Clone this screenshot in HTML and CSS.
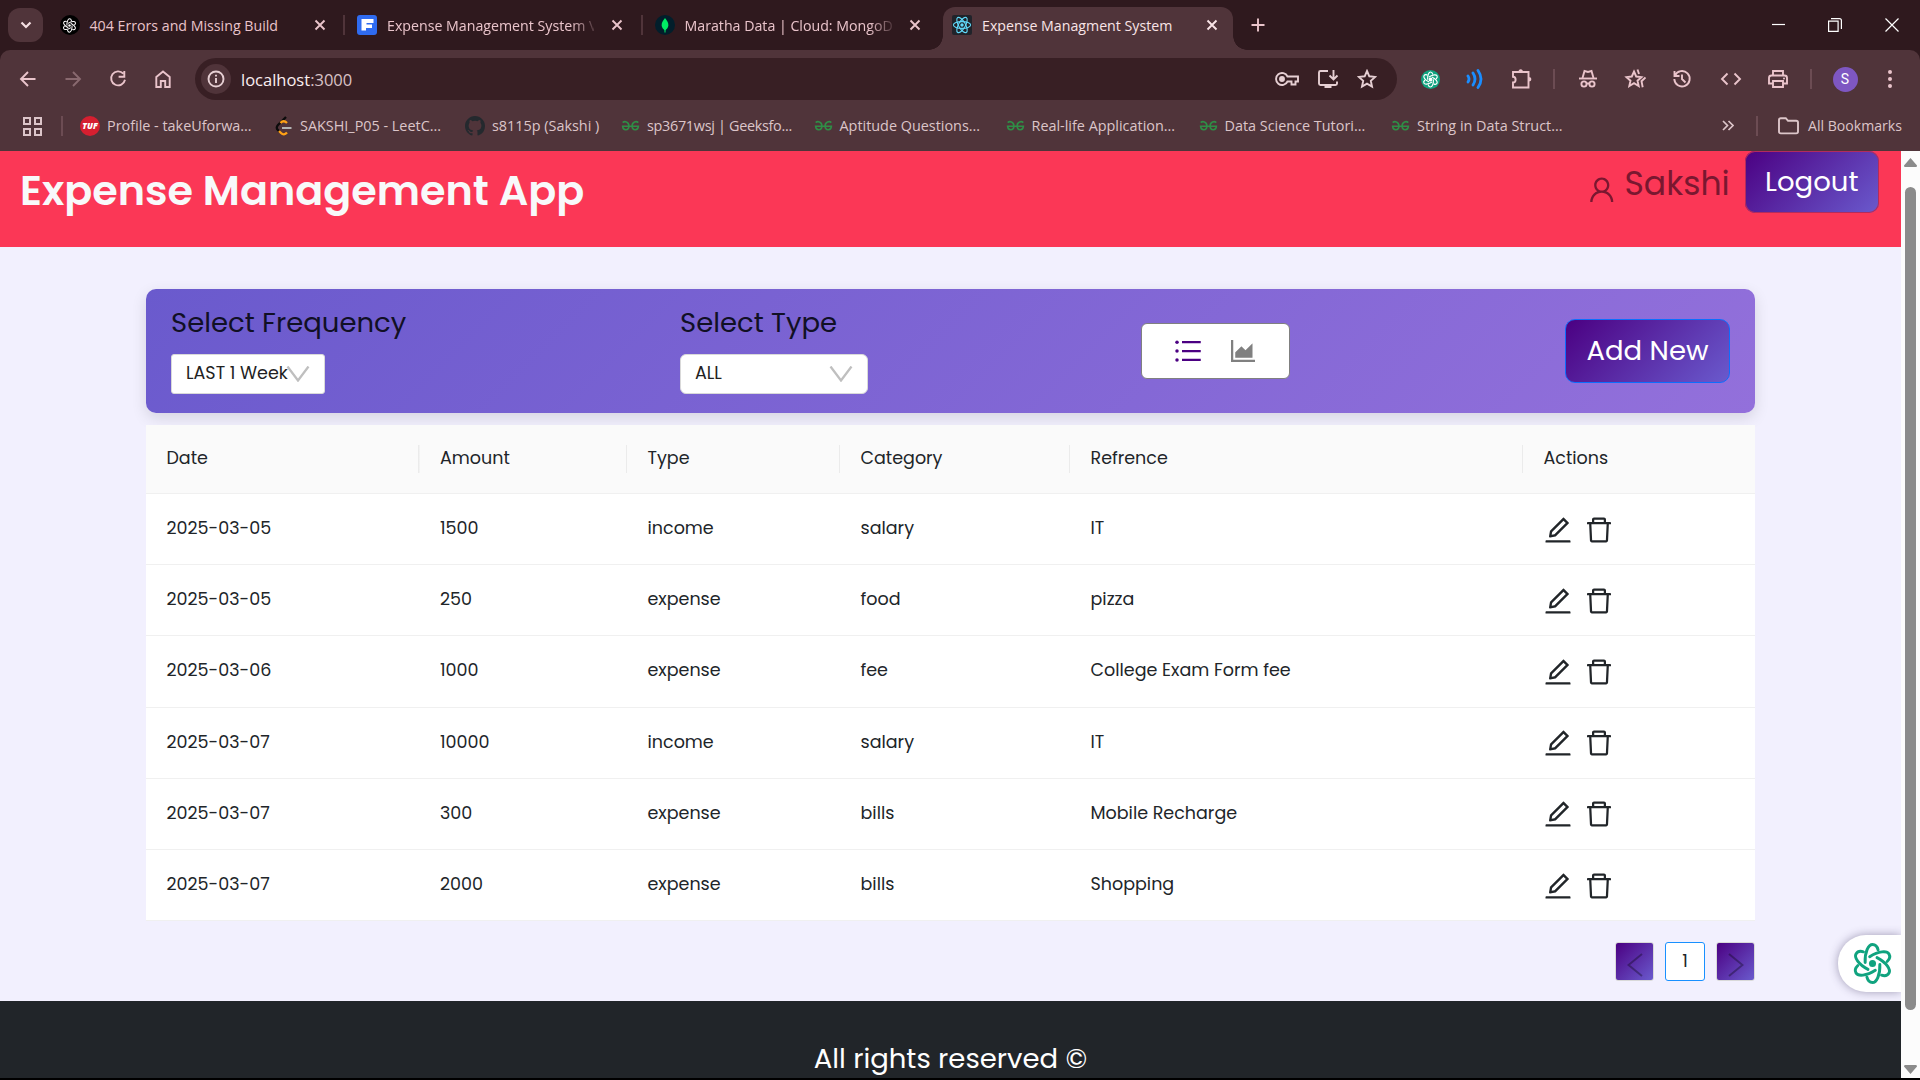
FILE: index.html
```html
<!DOCTYPE html>
<html lang="en">
<head>
<meta charset="utf-8">
<title>Expense Managment System</title>
<link rel="stylesheet" href="styles.css">
</head>
<body>
<svg class="defs" width="0" height="0" aria-hidden="true">
  <symbol id="x" viewBox="0 0 12 12"><path d="M1.500 1.500l9 9M10.500 1.500l-9 9" fill="none" stroke="currentColor" stroke-width="1.900"/></symbol>
  <symbol id="gfg" viewBox="0 0 20 12"><path d="M1.800 2.400C3.500.8 8.300 1 8.300 6c0 5-6.300 5.300-6.600.2H18.300c-.3 5.100-6.600 4.800-6.600-.2 0-5 4.800-5.200 6.500-3.600" fill="none" stroke="#2f8d46" stroke-width="1.700"/></symbol>
  <symbol id="knot" viewBox="-22 -22 44 44">
    <g fill="none" stroke="currentColor" stroke-linecap="round">
      <path id="petal" d="M-7.500-1C-8-12-4-19.500 0-19.500c3 0 5 2.500 5.700 5.500"/>
      <use href="#petal" transform="rotate(60)"/><use href="#petal" transform="rotate(120)"/><use href="#petal" transform="rotate(180)"/><use href="#petal" transform="rotate(240)"/><use href="#petal" transform="rotate(300)"/>
    </g>
    <circle r="3.600" fill="currentColor"/>
  </symbol>
  <symbol id="edit" viewBox="64 64 896 896"><path fill="currentColor" d="M257.700 752c2 0 4-.2 6-.5L431.900 722c2-.4 3.900-1.300 5.300-2.800l423.900-423.900a9.960 9.960 0 000-14.100L694.900 114.900c-1.900-1.900-4.400-2.900-7.100-2.900s-5.200 1-7.100 2.900L256.800 538.800c-1.500 1.500-2.400 3.300-2.800 5.300l-29.500 168.200a33.500 33.500 0 009.400 29.800c6.600 6.400 14.900 9.900 23.800 9.900zm67.400-174.400L687.800 215l73.300 73.300-362.700 362.600-88.900 15.700 15.600-89zM880 836H144c-17.700 0-32 14.300-32 32v36c0 4.400 3.600 8 8 8h784c4.400 0 8-3.600 8-8v-36c0-17.700-14.300-32-32-32z"/></symbol>
  <symbol id="trash" viewBox="64 64 896 896"><path fill="currentColor" d="M360 184h304v72h72v-80c0-35.300-28.700-64-64-64H352c-35.300 0-64 28.700-64 64v80h72v-72zm504 72H160c-17.700 0-32 14.300-32 32v32c0 4.400 3.600 8 8 8h60.400l24.700 523c1.600 34.100 29.800 61 63.900 61h454c34.200 0 62.300-26.800 63.900-61l24.700-523H888c4.400 0 8-3.600 8-8v-32c0-17.700-14.300-32-32-32zM731.300 840H292.700l-24.200-512h487l-24.200 512z"/></symbol>
  <symbol id="down" viewBox="0 0 24 16"><path d="M1.500.5L12 14.500 22.500.5" fill="none" stroke="#bfbfbf" stroke-width="2.300"/></symbol>
</svg>

<div class="tabstrip">
  <span class="tab-search"><svg width="12" height="8" viewBox="0 0 12 8"><path d="M1.500 1.500L6 6l4.500-4.500" fill="none" stroke="currentColor" stroke-width="2.200"/></svg></span>
  <div class="tab">
    <span class="fav fav-gpt"><svg width="15" height="15" stroke-width="3"><use href="#knot"/></svg></span>
    <span class="tab-title">404 Errors and Missing Build</span>
    <svg class="close" width="12" height="12"><use href="#x"/></svg>
  </div>
  <div class="tab divided">
    <svg class="fav" viewBox="0 0 20 20"><rect width="20" height="20" rx="3" fill="#2f6bf0"/><path d="M4.500 4h12v4h-7v1.500h5.500V13H9v2.500H4.500z" fill="#fff"/></svg>
    <span class="tab-title fade">Expense Management System V</span>
    <svg class="close" width="12" height="12"><use href="#x"/></svg>
  </div>
  <div class="tab divided">
    <svg class="fav" viewBox="0 0 20 20"><circle cx="10" cy="10" r="10" fill="#021e2b"/><path d="M10 3c-5 6-4 9.500 0 12.500C14 12.500 15 9 10 3z" fill="#00ed64"/><path d="M10 11v6.500" stroke="#00ed64"/></svg>
    <span class="tab-title fade">Maratha Data | Cloud: MongoD</span>
    <svg class="close" width="12" height="12"><use href="#x"/></svg>
  </div>
  <div class="tab active">
    <svg class="fav" viewBox="0 0 20 20"><rect width="20" height="20" rx="2" fill="#20232a"/><g fill="none" stroke="#61dafb" stroke-width="1.100"><ellipse cx="10" cy="10" rx="8.600" ry="3.400"/><ellipse cx="10" cy="10" rx="8.600" ry="3.400" transform="rotate(60 10 10)"/><ellipse cx="10" cy="10" rx="8.600" ry="3.400" transform="rotate(120 10 10)"/></g><circle cx="10" cy="10" r="1.700" fill="#61dafb"/></svg>
    <span class="tab-title">Expense Managment System</span>
    <svg class="close" width="12" height="12"><use href="#x"/></svg>
  </div>
  <svg class="plus" width="14" height="14" viewBox="0 0 14 14"><path d="M7 .5v13M.5 7h13" stroke="currentColor" stroke-width="1.900"/></svg>
  <div class="window-controls">
    <svg width="13" height="14" viewBox="0 0 13 14"><path d="M0 6.500h13" stroke="#fff" stroke-width="1.200"/></svg>
    <svg width="14" height="14" viewBox="0 0 14 14"><path d="M.6 3.200h9.500v10.200H.6zM3 .6h8.500q1.900 0 1.900 1.900v8.500" fill="none" stroke="#fff" stroke-width="1.200"/></svg>
    <svg width="14" height="14" viewBox="0 0 14 14"><path d="M.5.5l13 13M13.500.5l-13 13" stroke="#fff" stroke-width="1.200"/></svg>
  </div>
</div>

<div class="toolbar-wrap">
<div class="toolbar">
  <div class="nav">
    <svg width="20" height="20" viewBox="0 0 20 20"><path d="M17.500 10H3.500M10 3l-7 7 7 7"/></svg>
    <svg class="dim" width="20" height="20" viewBox="0 0 20 20"><path d="M2.500 10h14M10 3l7 7-7 7"/></svg>
    <svg width="20" height="20" viewBox="0 0 20 20"><path d="M15.300 4.600A7 7 0 1 0 17 10.800M16.300 2v5.700h-5.700"/></svg>
    <svg width="20" height="20" viewBox="0 0 20 20"><path d="M3.300 8L10 2.500 16.700 8v10h-4.500v-6H7.800v6H3.300z"/></svg>
  </div>
  <div class="omnibox">
    <span class="site-info"><svg width="18" height="18" viewBox="0 0 18 18"><circle cx="9" cy="9" r="7.500"/><path d="M9 8v5M9 4.800v1.800"/></svg></span>
    <span class="url">localhost<i>:3000</i></span>
    <div class="omni-actions">
      <svg width="24" height="20" viewBox="0 0 24 20"><path d="M12.500 7.500A6 6 0 1 0 12.500 12.500H16.500v3h4v-3H23v-5z"/><circle cx="7" cy="10" r="2" fill="currentColor"/></svg>
      <svg width="24" height="20" viewBox="0 0 24 20"><path d="M12 2H4.500Q3 2 3 3.500v11Q3 16 4.500 16h15q1.500 0 1.500-1.500V12.500M17.500 1v9M13.500 6.500l4 4 4-4"/><path d="M8.500 17h7v2h-7z" fill="currentColor" stroke="none"/></svg>
      <svg width="20" height="20" viewBox="0 0 20 20"><path d="M10 2l2.300 5.300 5.900.6-4.400 3.900 1.200 5.800-5-3-5 3 1.200-5.800L1.800 7.900l5.900-.6z"/></svg>
    </div>
  </div>
  <div class="extensions">
    <span class="ext-gpt"><svg width="17" height="17"><use href="#knot"/></svg></span>
    <svg class="wave" width="20" height="20" viewBox="0 0 20 20"><path d="M3 7q2 3 0 6M8 4q4 6 0 12M13 1.500q6 8.500 0 17" stroke-linecap="round"/></svg>
    <svg width="22" height="22" viewBox="0 0 22 22"><path d="M3 4h15.500v15.500H3v-5c3.500-.2 3.500-5.500 0-5.700z"/><path d="M8.500 4a2.200 2.800 0 0 1 4.400 0zM18.500 9a2.800 2.200 0 0 1 0 4.400z" fill="currentColor" stroke="none"/></svg>
    <b></b>
    <svg width="20" height="20" viewBox="0 0 20 20"><path d="M1 9.500h18"/><path d="M4.500 9l2-7 3.500 1 3.500-1 2 7"/><circle cx="6" cy="15" r="2.600"/><circle cx="14" cy="15" r="2.600"/><path d="M8.500 14.500h3"/></svg>
    <svg width="22" height="20" viewBox="0 0 22 20"><path d="M10 2.500l2.200 5 5.300.6-4 3.600 1.200 5.300-4.700-2.800L5.300 17l1.200-5.300-4-3.600 5.300-.6z"/><path d="M13.500.5l1.500 4.500M21.500 8.500l-4 3.700 1.200 6"/></svg>
    <svg width="20" height="20" viewBox="0 0 20 20"><path d="M3 6.500A7.700 7.700 0 1 1 2.300 10M2.500 2v5h5M10 5.500V10l3.500 3.500"/></svg>
    <svg width="22" height="20" viewBox="0 0 22 20"><path d="M7.500 4.500L2 10l5.500 5.500M14.500 4.500L20 10l-5.500 5.500"/></svg>
    <svg width="22" height="20" viewBox="0 0 22 20"><path d="M6 6V2h10v4M6 14.500H2V9q0-2.500 2.500-2.500h13Q20 6.500 20 9v5.500h-4M6 12h10v6H6z"/><circle cx="17" cy="9.500" r="1" fill="currentColor" stroke="none"/></svg>
    <b></b>
    <span class="avatar">S</span>
    <svg width="6" height="20" viewBox="0 0 6 20"><g fill="currentColor" stroke="none"><circle cx="3" cy="3" r="2"/><circle cx="3" cy="10" r="2"/><circle cx="3" cy="17" r="2"/></g></svg>
  </div>
</div>
</div>

<div class="bookmarks">
  <svg class="apps" width="19" height="19" viewBox="0 0 19 19"><path d="M1 1h6v6H1zM12 1h6v6h-6zM1 12h6v6H1zM12 12h6v6h-6z" fill="none" stroke="currentColor" stroke-width="2"/></svg>
  <b></b>
  <div class="marks">
    <span><em class="tuf">TUF</em>Profile - takeUforwa...</span>
    <span><svg class="leet" width="17" height="20" viewBox="0 0 17 20"><path d="M11 1L3 9q-2.500 3 0 5l2 2" fill="none" stroke="#0b0b0b" stroke-width="2.300"/><path d="M5.500 7q3-3.500 6.500 0M4 15l2 2q3 3 6-.5" fill="none" stroke="#ffa116" stroke-width="2.300"/><path d="M7 12h9.500" stroke="#b3b3b3" stroke-width="2"/></svg>SAKSHI_P05 - LeetC...</span>
    <span><svg class="git" width="20" height="20" viewBox="0 0 16 16"><path fill="#24292e" d="M8 0C3.580 0 0 3.580 0 8c0 3.540 2.290 6.530 5.470 7.590.4.070.55-.17.55-.38 0-.19-.01-.82-.01-1.490-2.010.37-2.530-.49-2.690-.94-.09-.23-.48-.94-.82-1.130-.28-.15-.68-.52-.01-.53.63-.01 1.080.58 1.230.82.72 1.210 1.870.87 2.330.66.070-.52.28-.87.51-1.070-1.780-.2-3.640-.89-3.640-3.950 0-.87.31-1.590.82-2.150-.08-.2-.36-1.020.08-2.120 0 0 .67-.21 2.200.82a7.600 7.600 0 014 0c1.530-1.040 2.200-.82 2.200-.82.44 1.100.16 1.920.08 2.120.51.56.82 1.270.82 2.150 0 3.070-1.870 3.750-3.650 3.950.29.25.54.73.54 1.480 0 1.070-.01 1.930-.01 2.200 0 .21.15.46.55.38A8.010 8.010 0 0016 8c0-4.420-3.580-8-8-8z"/></svg>s8115p (Sakshi )</span>
    <span class="tight"><svg class="gfg" width="19" height="12"><use href="#gfg"/></svg>sp3671wsj | Geeksfo...</span>
    <span><svg class="gfg" width="19" height="12"><use href="#gfg"/></svg>Aptitude Questions...</span>
    <span><svg class="gfg" width="19" height="12"><use href="#gfg"/></svg>Real-life Application...</span>
    <span><svg class="gfg" width="19" height="12"><use href="#gfg"/></svg>Data Science Tutori...</span>
    <span><svg class="gfg" width="19" height="12"><use href="#gfg"/></svg>String in Data Struct...</span>
  </div>
  <svg class="more" width="12" height="11" viewBox="0 0 12 11"><path d="M1 1l4.500 4.500L1 10M6.500 1L11 5.500 6.500 10" fill="none" stroke="currentColor" stroke-width="1.700"/></svg>
  <b></b>
  <svg class="folder" width="21" height="18" viewBox="0 0 21 18"><path d="M1 3q0-1.800 1.800-1.800h5l2.200 2.600h8.200Q20 3.800 20 5.600v9q0 1.800-1.800 1.800H2.800Q1 16.400 1 14.600z" fill="none" stroke="currentColor" stroke-width="1.900"/></svg>
  <span class="all">All Bookmarks</span>
</div>

<div class="viewport">
  <div class="page">
    <header class="app-header">
      <h1>Expense Management App</h1>
      <div class="user">
        <svg width="27.500" height="27.500" viewBox="64 64 896 896"><path fill="currentColor" d="M858.500 763.600a374 374 0 00-80.600-119.500 375.630 375.630 0 00-119.500-80.600c-.4-.2-.8-.3-1.200-.5C719.500 518 760 444.700 760 362c0-137-111-248-248-248S264 225 264 362c0 82.700 40.500 156 102.800 201.100-.4.2-.8.3-1.200.5-44.800 18.900-85 46-119.500 80.600a375.630 375.630 0 00-80.600 119.500A371.700 371.700 0 00136 901.800a8 8 0 008 8.200h60c4.400 0 7.900-3.500 8-7.800 2-77.200 33-149.500 87.800-204.300 56.700-56.700 132-87.900 212.200-87.900s155.500 31.200 212.200 87.900C779 752.700 810 825 812 902.200c.1 4.400 3.600 7.800 8 7.800h60a8 8 0 008-8.200c-1-47.800-10.900-94.300-29.500-138.200zM512 534c-45.900 0-89.100-17.900-121.600-50.400S340 407.900 340 362c0-45.900 17.900-89.100 50.400-121.600S466.100 190 512 190s89.100 17.900 121.600 50.400S684 316.100 684 362c0 45.900-17.900 89.100-50.400 121.600S557.900 534 512 534z"/></svg>
        <span class="name">Sakshi</span>
        <button class="btn logout">Logout</button>
      </div>
    </header>

    <main class="content">
      <section class="filters">
        <div class="field freq"><label>Select Frequency</label><div class="select">LAST 1 Week<svg width="24" height="16"><use href="#down"/></svg></div></div>
        <div class="field type"><label>Select Type</label><div class="select">ALL<svg width="24" height="16"><use href="#down"/></svg></div></div>
        <div class="switch">
          <svg class="on" width="28" height="28" viewBox="64 64 896 896"><path fill="currentColor" d="M320 192h600v72H320zM320 476h600v72H320zM320 760h600v72H320z"/><g fill="currentColor"><circle cx="160" cy="228" r="56"/><circle cx="160" cy="512" r="56"/><circle cx="160" cy="796" r="56"/></g></svg>
          <svg width="28" height="28" viewBox="64 64 896 896"><path fill="currentColor" d="M888 792H200V168c0-4.400-3.600-8-8-8h-56c-4.400 0-8 3.600-8 8v688c0 4.400 3.600 8 8 8h752c4.400 0 8-3.600 8-8v-56c0-4.400-3.600-8-8-8zm-616-64h536c4.400 0 8-3.600 8-8V284c0-7.200-8.700-10.700-13.700-5.700L592 488.600l-125.400-124a8.030 8.030 0 00-11.300 0l-189 189.600a7.870 7.870 0 00-2.300 5.600V720c0 4.400 3.600 8 8 8z"/></svg>
        </div>
        <button class="btn add">Add New</button>
      </section>

      <table class="records">
        <colgroup><col class="c-date"><col class="c-amount"><col class="c-type"><col class="c-category"><col class="c-ref"><col></colgroup>
        <thead><tr><th>Date</th><th>Amount</th><th>Type</th><th>Category</th><th>Refrence</th><th>Actions</th></tr></thead>
        <tbody>
          <tr><td>2025-03-05</td><td>1500</td><td>income</td><td>salary</td><td>IT</td><td class="actions"><svg><use href="#edit"/></svg><svg><use href="#trash"/></svg></td></tr>
          <tr><td>2025-03-05</td><td>250</td><td>expense</td><td>food</td><td>pizza</td><td class="actions"><svg><use href="#edit"/></svg><svg><use href="#trash"/></svg></td></tr>
          <tr><td>2025-03-06</td><td>1000</td><td>expense</td><td>fee</td><td>College Exam Form fee</td><td class="actions"><svg><use href="#edit"/></svg><svg><use href="#trash"/></svg></td></tr>
          <tr><td>2025-03-07</td><td>10000</td><td>income</td><td>salary</td><td>IT</td><td class="actions"><svg><use href="#edit"/></svg><svg><use href="#trash"/></svg></td></tr>
          <tr><td>2025-03-07</td><td>300</td><td>expense</td><td>bills</td><td>Mobile Recharge</td><td class="actions"><svg><use href="#edit"/></svg><svg><use href="#trash"/></svg></td></tr>
          <tr><td>2025-03-07</td><td>2000</td><td>expense</td><td>bills</td><td>Shopping</td><td class="actions"><svg><use href="#edit"/></svg><svg><use href="#trash"/></svg></td></tr>
        </tbody>
      </table>

      <div class="pager">
        <span class="step"><svg width="16" height="24" viewBox="0 0 16 24"><path d="M15 1L1.500 12 15 23"/></svg></span>
        <span class="current">1</span>
        <span class="step"><svg width="16" height="24" viewBox="0 0 16 24"><path d="M1 1l13.500 11L1 23"/></svg></span>
      </div>
    </main>

    <footer class="app-footer">All rights reserved ©</footer>
    <div class="assistant"><svg width="43" height="43" stroke-width="3"><use href="#knot"/></svg></div>
  </div>
  <div class="scrollbar">
    <svg width="13" height="9" viewBox="0 0 13 9"><path d="M6.500 0L13 7.500Q13 9 12 9H1Q0 9 0 7.500z" fill="#8b8b8b"/></svg>
    <span class="thumb"></span>
    <svg width="13" height="9" viewBox="0 0 13 9"><path d="M6.500 9L13 1.500Q13 0 12 0H1Q0 0 0 1.500z" fill="#8b8b8b"/></svg>
  </div>
</div>
</body>
</html>
```
FILE: styles.css
```css
* { box-sizing: border-box; }
body {
  margin: 0;
  width: 1920px;
  height: 1080px;
  overflow: hidden;
  display: flex;
  flex-direction: column;
  background: #000;
  font-family: "Open Sans", "Noto Sans", sans-serif;
}
svg { flex: none; display: block; }
.defs { position: absolute; }

/* Browser tabs */
.tabstrip {
  height: 50px;
  flex: none;
  display: flex;
  align-items: center;
  background: #2f191e;
  color: #eac4cb;
  padding-left: 8px;
}
.tab-search {
  width: 35px;
  height: 34px;
  border-radius: 12px;
  background: #50343a;
  color: #f5dfe2;
  display: flex;
  align-items: center;
  justify-content: center;
  margin-right: 7.5px;
}
.tab {
  width: 297.5px;
  height: 34px;
  display: flex;
  align-items: center;
  padding-left: 9px;
}
.tab.divided {
  width: 302.5px;
  margin-left: -5px;
  padding-left: 14px;
  background: linear-gradient(#50343a, #50343a) left center / 2px 20px no-repeat;
}
.tab.active {
  position: relative;
  align-self: flex-end;
  width: 290px;
  height: 43px;
  padding-bottom: 7px;
  background: #50343a;
  border-radius: 12px 12px 0 0;
  color: #f9e4e7;
}
.tab.active::before, .tab.active::after {
  content: "";
  position: absolute;
  bottom: 0;
  width: 14px;
  height: 14px;
}
.tab.active::before { left: -14px; background: radial-gradient(circle at 0 0, transparent 13.5px, #50343a 14px); }
.tab.active::after { right: -14px; background: radial-gradient(circle at 100% 0, transparent 13.5px, #50343a 14px); }
.fav { width: 20px; height: 20px; }
.fav-gpt {
  border-radius: 50%;
  background: #000;
  color: #fff;
  display: flex;
  align-items: center;
  justify-content: center;
}
.tab-title {
  width: 207px;
  margin: 1px 17px 0 10px;
  white-space: nowrap;
  font-size: 14.2px;
  line-height: 24px;
}
.fade {
  -webkit-mask-image: linear-gradient(90deg, #000 184px, transparent 212px);
  mask-image: linear-gradient(90deg, #000 184px, transparent 212px);
}
.plus { margin-left: 18px; }
.window-controls {
  margin-left: auto;
  display: flex;
  gap: 43px;
  padding-right: 21px;
}

/* Address row */
.toolbar-wrap { flex: none; background: #2f191e; }
.toolbar {
  height: 58px;
  display: flex;
  align-items: center;
  background: #50343a;
  color: #eac4cb;
  border-radius: 10px 10px 0 0;
  padding: 0 25px 0 17.5px;
}
.toolbar svg { fill: none; stroke: currentColor; stroke-width: 1.9; }
.nav { display: flex; gap: 25px; }
.toolbar .dim { color: #89696f; }
.omnibox {
  width: 1202px;
  height: 42px;
  margin-left: 22.5px;
  padding: 0 20px 0 6px;
  display: flex;
  align-items: center;
  border-radius: 21px;
  background: #381f24;
  color: #e6cfd3;
}
.site-info {
  width: 30px;
  height: 30px;
  border-radius: 50%;
  background: #50343a;
  display: flex;
  align-items: center;
  justify-content: center;
}
.url { margin-left: 10px; font-size: 16.5px; color: #fbeef0; }
.url i { font-style: normal; color: #d9c2c6; }
.omni-actions { margin-left: auto; display: flex; gap: 17px; }
.extensions {
  margin-left: 23.5px;
  display: flex;
  align-items: center;
  gap: 25px;
}
.extensions b { width: 2px; height: 20px; background: #6c4c53; margin: 0 -2px 0 -4px; }
.extensions b + .avatar { margin-left: -2px; }
.extensions svg:nth-child(6), .extensions svg:nth-child(7) { margin-left: 1px; }
.extensions svg:nth-child(8) { margin-left: 3px; }
.extensions .avatar + svg { margin-left: 4px; }
.ext-gpt {
  width: 19px;
  height: 19px;
  border-radius: 50%;
  background: #10a37f;
  color: #fff;
  display: flex;
  align-items: center;
  justify-content: center;
}
.toolbar .ext-gpt svg { stroke-width: 3; }
.toolbar .wave { color: #1a8dff; stroke-width: 2.8; }
.avatar {
  width: 25px;
  height: 25px;
  border-radius: 50%;
  background: #7e57c2;
  color: #fff;
  font: 14px/25px Roboto, sans-serif;
  text-align: center;
}

/* Bookmarks bar */
.bookmarks {
  height: 43px;
  flex: none;
  display: flex;
  align-items: center;
  padding: 0 18px 8px 23px;
  color: #dcc5c9;
  font-size: 14.4px;
  background: #50343a;
}
.apps { margin-top: 1px; }
.bookmarks b { width: 2px; height: 20px; background: #6c4c53; margin-left: 19px; }
.marks {
  display: grid;
  grid-template-columns: 195px 190px 156px 192.5px 192px 193px 192.5px 170px;
  margin-left: 17px;
  white-space: nowrap;
}
.marks span { display: flex; align-items: center; height: 24px; }
.marks .tight { letter-spacing: -.3px; }
.tuf {
  width: 20px;
  height: 20px;
  margin-right: 7px;
  border-radius: 50%;
  background: #d51f30;
  color: #fff;
  font: italic 800 8.5px/20px "Open Sans", sans-serif;
  text-align: center;
}
.leet { margin-right: 8px; }
.git, .gfg { margin-right: 7px; }
.more { margin-left: auto; }
.bookmarks .more + b { margin-left: 22px; }
.folder { margin: 0 9px 0 20px; }
.all { font-size: 14.1px; white-space: nowrap; }

/* Web page */
.viewport { height: 927px; display: flex; flex: none; }
.page {
  position: relative;
  width: 1901px;
  height: 927px;
  overflow: hidden;
  background: #f2f0fe;
  color: #212529;
  font-family: Poppins, Inter, "Open Sans", sans-serif;
}
.app-header {
  height: 96px;
  display: flex;
  justify-content: space-between;
  background: #fb3756;
  padding: 0 22px 0 20px;
}
.app-header h1 {
  margin: 0;
  font-size: 41.3px;
  font-weight: 600;
  line-height: 79px;
  color: #f8f9fa;
}
.user { display: flex; align-items: center; height: 62px; color: #7a1730; }
.user svg { margin: 15px 9px 0 0; }
.name { width: 120px; padding-top: 3px; font-size: 33px; }
.btn {
  border-radius: 10px;
  background: linear-gradient(135deg, #4b0082, #6a5acd);
  color: #fff;
  font-family: inherit;
  font-weight: 400;
  font-size: 27.5px;
  padding: 0;
}
.logout { width: 134.5px; height: 62px; border: 0; padding-bottom: 1px; box-shadow: 0 0 0 1px #b22c5c inset; }
.content { padding: 42px 146px 0; }
.filters {
  height: 124px;
  display: flex;
  align-items: center;
  padding: 0 25px;
  border-radius: 10px;
  background: linear-gradient(135deg, #6a5acd, #9370db);
  box-shadow: 0 5px 15px rgba(0, 0, 0, .12);
}
.field { margin-bottom: 7px; color: #111025; }
.freq { width: 509px; }
.type { width: 461px; }
.field label { display: block; font-size: 27.5px; line-height: 42px; margin-bottom: 10px; }
.select {
  display: flex;
  align-items: center;
  justify-content: space-between;
  height: 40px;
  border: 1px solid #d9d9d9;
  border-radius: 3px;
  background: #fff;
  color: #222;
  padding: 0 14px 1px;
  font-size: 17.5px;
  white-space: nowrap;
}
.select svg { margin-top: 1px; }
.freq .select { width: 154px; }
.freq .select svg { margin-left: -3px; }
.type .select { width: 188px; border-radius: 6px; }
.switch {
  width: 149px;
  height: 56px;
  display: flex;
  align-items: center;
  gap: 27px;
  margin-bottom: 1px;
  padding-left: 32px;
  border: 1px solid #808080;
  border-radius: 6px;
  background: #fff;
  color: #808080;
}
.switch .on { color: #4b0082; }
.add { width: 165px; height: 64px; margin-left: auto; border: 1px solid #0d6efd; }

/* Records */
.records {
  width: 1609px;
  margin-top: 12px;
  table-layout: fixed;
  border-collapse: separate;
  border-spacing: 0;
  background: #fff;
  font-size: 17.5px;
}
.c-date { width: 273.5px; }
.c-amount { width: 207.5px; }
.c-type { width: 213px; }
.c-category { width: 230px; }
.c-ref { width: 453px; }
.records th, .records td {
  text-align: left;
  font-weight: 400;
  padding: 0 0 2px 20.5px;
  border-bottom: 1px solid #f0f0f0;
}
.records th {
  height: 69px;
  background: #fafafa linear-gradient(#ebebeb, #ebebeb) right center / 1.5px 28px no-repeat;
}
.records th:last-child { background-image: none; }
.records td { height: 71.2px; }
.records td.actions { padding: 1px 0 0 20.5px; }
.actions svg { display: inline-block; vertical-align: middle; width: 28px; height: 28px; margin-right: 13px; }
.pager {
  display: flex;
  justify-content: flex-end;
  gap: 11px;
  height: 39px;
  margin-top: 21px;
}
.pager span {
  width: 39px;
  height: 39px;
  border: 1px solid #d9d9d9;
  border-radius: 3px;
  display: flex;
  align-items: center;
  justify-content: center;
}
.step { background: linear-gradient(135deg, #4b0082, #6a5acd); }
.step svg { margin-top: 7px; fill: none; stroke: rgba(0, 0, 0, .32); stroke-width: 2; }
.pager .current { width: 40px; border-color: #1890ff; background: #fff; font-size: 17.5px; padding-bottom: 2px; }
.app-footer {
  height: 80px;
  margin-top: 20px;
  background: #212529;
  color: #fff;
  text-align: center;
  font-size: 27.5px;
  line-height: 116px;
  overflow: hidden;
}
.assistant {
  position: absolute;
  right: 0;
  top: 784px;
  width: 63px;
  height: 57px;
  padding: 7px 0 0 13px;
  border-radius: 28px 0 0 28px;
  background: #fff;
  color: #10a37f;
  box-shadow: 0 0 10px rgba(60, 50, 90, .45);
}
.scrollbar {
  width: 19px;
  display: flex;
  flex-direction: column;
  align-items: center;
  background: #fcfcfc;
  padding: 7px 0 4px;
}
.thumb { width: 11px; height: 823px; margin: 20px 0 auto; border-radius: 6px; background: #8b8b8b; }
```
